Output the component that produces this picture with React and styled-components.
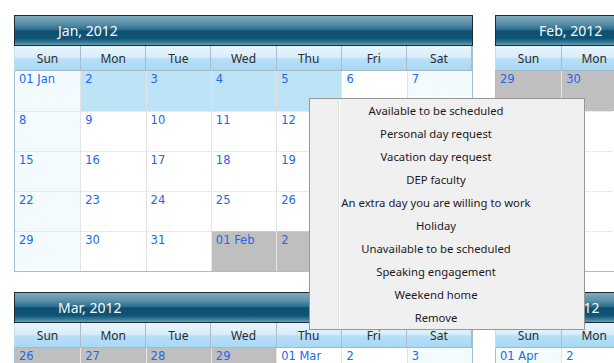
import React from 'react';
import styled, { createGlobalStyle } from 'styled-components';

const GlobalStyle = createGlobalStyle`
  *, *::before, *::after { box-sizing: border-box; }
  html, body { margin: 0; padding: 0; background: #fff; overflow: hidden; }
  #root { width: 614px; height: 363px; overflow: hidden; }
`;

const Page = styled.div`
  position: relative;
  padding: 15px 0 0 14px;
  display: grid;
  grid-template-columns: repeat(2, 459px);
  column-gap: 22px;
  row-gap: 20px;
  width: max-content;
`;

const Calendar = styled.section`
  width: 459px;
  display: flex;
  flex-direction: column;
`;

const Header = styled.div`
  height: 31px;
  border: 1px solid #1c2a31;
  background: linear-gradient(
    #7eaabe 0%,
    #5c93ab 25%,
    #2f6f8e 46%,
    #0c4f71 52%,
    #0f5576 78%,
    #3e7f9b 92%,
    #6d9fb5 100%
  );
  display: flex;
  align-items: center;
  padding-left: 43px;
  font: 14px "Noto Sans", sans-serif;
  color: #f7fbfd;
`;

const DayNames = styled.div`
  display: grid;
  grid-template-columns: repeat(7, 1fr);
  height: 25px;
  border-left: 1px solid #c4dceb;
  border-right: 2px solid #a9bbc7;
  border-bottom: 1px solid #a3b9c8;
  background: linear-gradient(#e7f5fd 0%, #d9eefb 45%, #b6dff7 55%, #a9d8f4 100%);
`;

const DayName = styled.div`
  display: flex;
  align-items: center;
  justify-content: center;
  font: 12px "Noto Sans", sans-serif;
  color: #2c2c2c;
  & + & { border-left: 1px solid #abbdca; }
`;

const Body = styled.div`
  display: grid;
  grid-template-columns: repeat(7, 1fr);
  grid-auto-rows: 40px;
  border: 1px solid #a3bfd1;
  border-top: none;
`;

const cellBg = (p) =>
  p.$other ? '#bfbfbf' : p.$selected ? '#bde3f7' : p.$weekend ? '#f4fbff' : '#ffffff';

const Cell = styled.div`
  background: ${cellBg};
  border-left: ${(p) => (p.$firstCol ? 'none' : `1px solid ${p.$other ? '#e8e8e8' : '#e3e3e3'}`)};
  border-top: ${(p) => (p.$firstRow ? 'none' : '1px dotted #cfdce5')};
  padding: 1px 0 0 4px;
  font: 11.5px "DejaVu Sans", sans-serif;
  color: #2368e8;
  white-space: nowrap;
  overflow: hidden;
`;

const Menu = styled.div`
  position: absolute;
  left: 309px;
  top: 98px;
  width: 276px;
  border: 1px solid #979797;
  background: #f0f0f0;
  display: flex;
`;

const Gutter = styled.div`
  width: 30px;
  border-right: 1px solid #ffffff;
  box-shadow: inset -1px 0 0 #e0e1e1;
`;

const MenuList = styled.ul`
  list-style: none;
  margin: 0;
  padding: 0;
  flex: 1;
`;

const MenuItem = styled.li`
  height: 23px;
  display: flex;
  align-items: center;
  justify-content: center;
  padding-right: 52px;
  font: 11.3px "Noto Sans", sans-serif;
  color: #1c1a1c;
  white-space: nowrap;
`;

const MONTHS = ['Jan', 'Feb', 'Mar', 'Apr', 'May', 'Jun', 'Jul', 'Aug', 'Sep', 'Oct', 'Nov', 'Dec'];
const DAYS = ['Sun', 'Mon', 'Tue', 'Wed', 'Thu', 'Fri', 'Sat'];

function buildWeeks(year, month) {
  const first = new Date(year, month, 1);
  const start = new Date(year, month, 1 - first.getDay());
  const last = new Date(year, month + 1, 0);
  const weeks = [];
  const d = new Date(start);
  while (d <= last) {
    const week = [];
    for (let i = 0; i < 7; i++) {
      week.push({ day: d.getDate(), month: d.getMonth(), year: d.getFullYear() });
      d.setDate(d.getDate() + 1);
    }
    weeks.push(week);
  }
  return weeks;
}

const isSelected = (c) => c.year === 2012 && c.month === 0 && c.day >= 2 && c.day <= 5;

function MonthCalendar({ year, month }) {
  const weeks = buildWeeks(year, month);
  return (
    <Calendar>
      <Header>{`${MONTHS[month]}, ${year}`}</Header>
      <DayNames>
        {DAYS.map((d) => (
          <DayName key={d}>{d}</DayName>
        ))}
      </DayNames>
      <Body>
        {weeks.map((week, r) =>
          week.map((c, i) => (
            <Cell
              key={`${r}-${i}`}
              $firstRow={r === 0}
              $firstCol={i === 0}
              $weekend={i === 0 || i === 6}
              $other={c.month !== month}
              $selected={isSelected(c)}
            >
              {c.day === 1 ? `01 ${MONTHS[c.month]}` : c.day}
            </Cell>
          ))
        )}
      </Body>
    </Calendar>
  );
}

const MENU_ITEMS = [
  'Available to be scheduled',
  'Personal day request',
  'Vacation day request',
  'DEP faculty',
  'An extra day you are willing to work',
  'Holiday',
  'Unavailable to be scheduled',
  'Speaking engagement',
  'Weekend home',
  'Remove',
];

export default function App() {
  return (
    <>
      <GlobalStyle />
      <Page>
        <MonthCalendar year={2012} month={0} />
        <MonthCalendar year={2012} month={1} />
        <MonthCalendar year={2012} month={2} />
        <MonthCalendar year={2012} month={3} />
        <Menu>
          <Gutter />
          <MenuList>
            {MENU_ITEMS.map((m) => (
              <MenuItem key={m}>{m}</MenuItem>
            ))}
          </MenuList>
        </Menu>
      </Page>
    </>
  );
}
